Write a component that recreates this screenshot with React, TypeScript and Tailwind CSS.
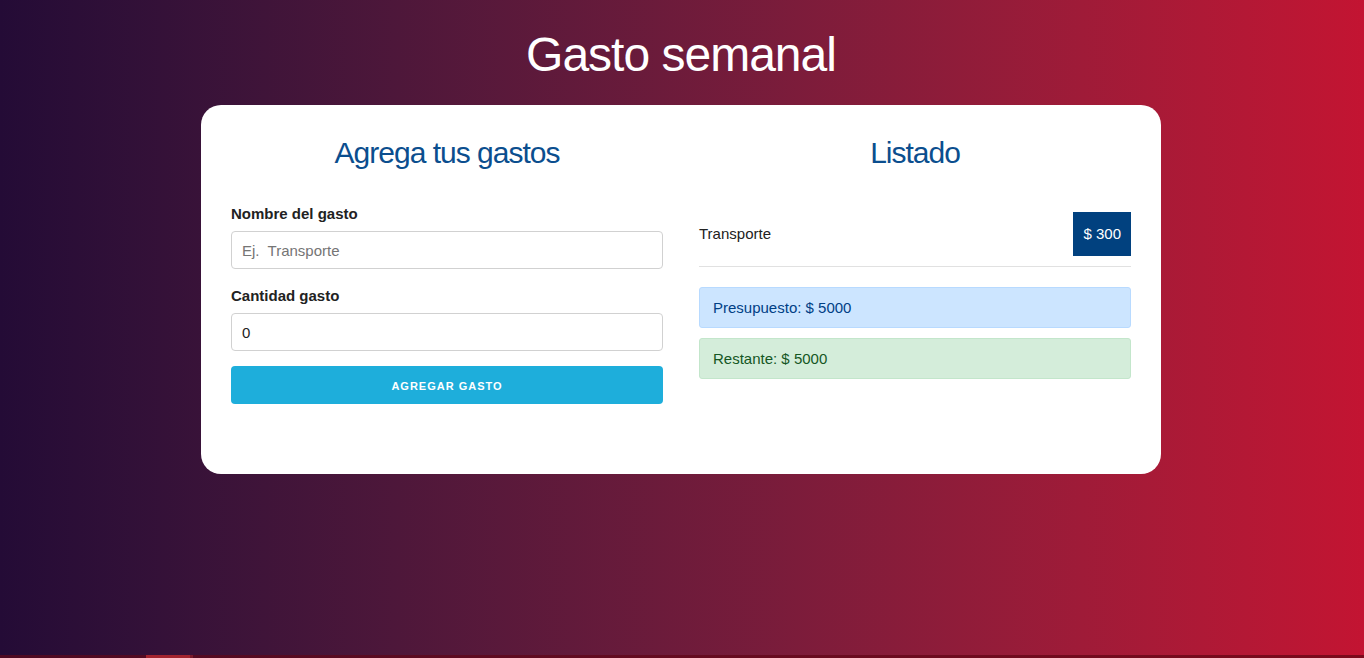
const font = { fontFamily: '"Liberation Sans", Arial, sans-serif' }

function Field({ label, children }: { label: string; children: React.ReactNode }) {
  return (
    <div className="mb-[15px]">
      <label className="block text-[15px] leading-[24px] font-bold text-[#222] mb-[5px]">{label}</label>
      {children}
    </div>
  )
}

export default function App() {
  return (
    <div
      className="min-h-screen flex flex-col bg-gradient-to-r from-[#240b36] to-[#c31432] text-[#222]"
      style={font}
    >
      <div className="flex-1 flex flex-col items-center pt-[26px] pr-[2px]">
        <h1 className="text-white text-[48px] leading-[58px] tracking-[-1px] mb-[21px]">Gasto semanal</h1>

        <div className="w-[960px] bg-white rounded-[20px] px-[30px] pt-[28px] pb-[70px] grid grid-cols-2 gap-[36px]">
          <div>
            <h3 className="text-center text-[30px] leading-[39px] tracking-[-1px] text-[#0b4e8e] mb-[30px]">
              Agrega tus gastos
            </h3>
            <form onSubmit={(e) => e.preventDefault()}>
              <Field label="Nombre del gasto">
                <input
                  type="text"
                  placeholder="Ej.  Transporte"
                  className="w-full h-[38px] px-[10px] border border-[#d1d1d1] rounded-[4px] text-[15px] placeholder:text-[#757575] outline-none"
                />
              </Field>
              <Field label="Cantidad gasto">
                <input
                  type="number"
                  defaultValue={0}
                  className="w-full h-[38px] px-[10px] border border-[#d1d1d1] rounded-[4px] text-[15px] text-[#222] outline-none"
                />
              </Field>
              <button
                type="submit"
                className="w-full h-[38px] pt-[2px] bg-[#1eaedb] text-white rounded-[4px] text-[11px] font-bold tracking-[1px] uppercase"
              >
                Agregar gasto
              </button>
            </form>
          </div>

          <div>
            <h3 className="text-center text-[30px] leading-[39px] tracking-[-1px] text-[#0b4e8e] mb-[30px]">
              Listado
            </h3>
            <div className="flex items-center justify-between py-[10px] border-b border-[#e1e1e1]">
              <span className="text-[15px] text-[#222]">Transporte</span>
              <span className="bg-[#01417f] text-white text-[15px] leading-[24px] px-[10px] py-[10px]">$ 300</span>
            </div>
            <div className="mt-[20px] h-[41px] flex items-center pt-[2px] px-[13px] bg-[#cce5ff] border border-[#b8daff] rounded-[3px] text-[15px] text-[#004085]">
              Presupuesto: $ 5000
            </div>
            <div className="mt-[10px] h-[41px] flex items-center pt-[2px] px-[13px] bg-[#d4edda] border border-[#c3e6cb] rounded-[3px] text-[15px] text-[#155724]">
              Restante: $ 5000
            </div>
          </div>
        </div>
      </div>
      <div className="h-[3px] bg-gradient-to-r from-[#4e0a22] to-[#7c0a1c] flex">
        <div className="ml-[146px] w-[44px] bg-[#a3242f]" />
        <div className="w-[3px] bg-[#7a1a2a]" />
      </div>
    </div>
  )
}
